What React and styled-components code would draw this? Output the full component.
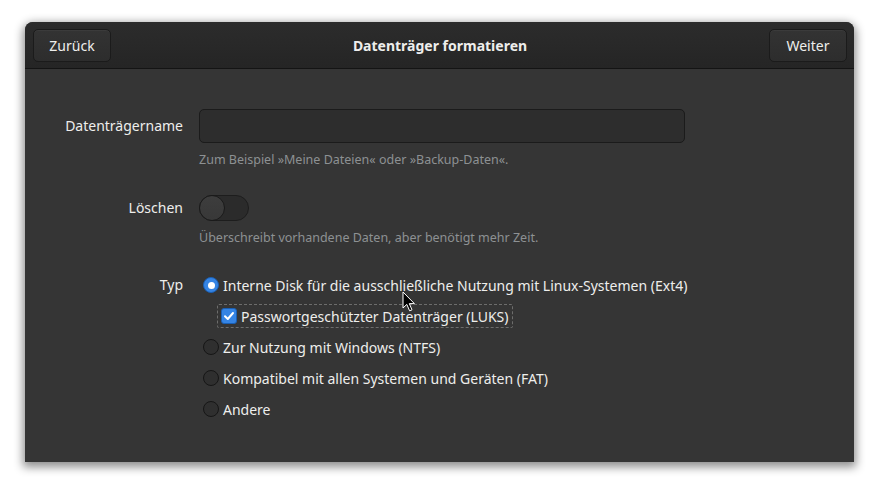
import React from "react";
import styled, { createGlobalStyle } from "styled-components";

const Global = createGlobalStyle`
  html, body {
    margin: 0;
    background: #ffffff;
  }
  body {
    font-family: "Noto Sans", "Open Sans", sans-serif;
    font-size: 14px;
    color: #eeeeec;
  }
`;

const Page = styled.div`
  width: 880px;
  height: 490px;
  padding: 22px 26px 0 25px;
  box-sizing: border-box;
  position: relative;
`;

const Window = styled.div`
  width: 829px;
  height: 440px;
  background: #353535;
  border-radius: 8px 8px 0 0;
  box-shadow: 0 3px 10px 2px rgba(0, 0, 0, 0.45);
  display: flex;
  flex-direction: column;
  overflow: hidden;
`;

const HeaderBar = styled.div`
  height: 46px;
  flex: none;
  background: linear-gradient(#2c2c2c, #252525);
  border-bottom: 1px solid #141414;
  display: flex;
  align-items: center;
  justify-content: space-between;
  padding: 0 7px 0 8px;
`;

const Title = styled.div`
  font-weight: 700;
  font-size: 14px;
  color: #eeeeec;
`;

const HeaderButton = styled.button`
  height: 33px;
  width: 78px;
  border: 1px solid #1b1b1b;
  border-radius: 5px;
  background: linear-gradient(#333333, #2d2d2d);
  color: #eeeeec;
  font-family: inherit;
  font-size: 14px;
  box-shadow: inset 0 1px rgba(255, 255, 255, 0.04);
`;

const Form = styled.div`
  padding-top: 40px;
  display: flex;
  flex-direction: column;
  gap: 27px;
`;

const Field = styled.div`
  display: grid;
  grid-template-columns: 158px auto;
  column-gap: 16px;
  align-items: start;
  white-space: nowrap;
`;

const Label = styled.div`
  text-align: right;
  line-height: ${(p) => p.$h}px;
  height: ${(p) => p.$h}px;
`;

const Control = styled.div`
  display: flex;
  flex-direction: column;
  align-items: flex-start;
`;

const TextInput = styled.input`
  width: 486px;
  height: 34px;
  box-sizing: border-box;
  background: #2d2d2d;
  border: 1px solid #1b1b1b;
  border-radius: 5px;
  color: #eeeeec;
  outline: none;
`;

const Hint = styled.div`
  margin-top: 8px;
  line-height: 17px;
  font-size: 12.5px;
  color: #8d9193;
`;

const Switch = styled.div`
  width: 50px;
  height: 26px;
  box-sizing: border-box;
  border-radius: 13px;
  background: #2b2b2b;
  border: 1px solid #1d1d1d;
  position: relative;
`;

const Knob = styled.div`
  position: absolute;
  left: -1px;
  top: -1px;
  width: 26px;
  height: 26px;
  box-sizing: border-box;
  border-radius: 50%;
  background: linear-gradient(#3d3d3d, #383838);
  border: 1px solid #1a1a1a;
`;

const Options = styled.div`
  display: flex;
  flex-direction: column;
  gap: 7px;
  padding-left: 4px;
`;

const Option = styled.div`
  display: flex;
  align-items: center;
  gap: 4px;
  height: 24px;
  box-sizing: border-box;
  align-self: flex-start;
  ${(p) =>
    p.$focus &&
    `
    margin-left: 14px;
    padding: 0 4px 0 3px;
    border: 1px dashed rgba(238, 238, 236, 0.3);
    border-radius: 2px;
  `}
`;

const Radio = styled.span`
  width: 16px;
  height: 16px;
  box-sizing: border-box;
  border-radius: 50%;
  flex: none;
  display: flex;
  align-items: center;
  justify-content: center;
  background: ${(p) => (p.$on ? "#3584e4" : "#2f2f2f")};
  border: 1px solid ${(p) => (p.$on ? "#1a5fb4" : "#161616")};
  &::after {
    content: "";
    display: ${(p) => (p.$on ? "block" : "none")};
    width: 7px;
    height: 7px;
    border-radius: 50%;
    background: #ffffff;
  }
`;

const Check = styled.span`
  width: 16px;
  height: 16px;
  box-sizing: border-box;
  border-radius: 3px;
  flex: none;
  background: #3584e4;
  border: 1px solid #1a5fb4;
  display: flex;
  align-items: center;
  justify-content: center;
`;

const Pointer = styled.svg`
  position: absolute;
  left: 402px;
  top: 291px;
`;

const options = [
  "Zur Nutzung mit Windows (NTFS)",
  "Kompatibel mit allen Systemen und Geräten (FAT)",
  "Andere",
];

export default function App() {
  return (
    <>
      <Global />
      <Page>
        <Window>
          <HeaderBar>
            <HeaderButton>Zurück</HeaderButton>
            <Title>Datenträger formatieren</Title>
            <HeaderButton>Weiter</HeaderButton>
          </HeaderBar>
          <Form>
            <Field>
              <Label $h={34}>Datenträgername</Label>
              <Control>
                <TextInput />
                <Hint>Zum Beispiel »Meine Dateien« oder »Backup-Daten«.</Hint>
              </Control>
            </Field>
            <Field>
              <Label $h={26}>Löschen</Label>
              <Control>
                <Switch>
                  <Knob />
                </Switch>
                <Hint>Überschreibt vorhandene Daten, aber benötigt mehr Zeit.</Hint>
              </Control>
            </Field>
            <Field>
              <Label $h={24}>Typ</Label>
              <Options>
                <Option>
                  <Radio $on />
                  Interne Disk für die ausschließliche Nutzung mit Linux-Systemen (Ext4)
                </Option>
                <Option $focus>
                  <Check>
                    <svg width="12" height="12" viewBox="0 0 12 12">
                      <path d="M2 6.2 L4.8 9 L10 3" fill="none" stroke="#fff" strokeWidth="2" strokeLinecap="round" strokeLinejoin="round" />
                    </svg>
                  </Check>
                  Passwortgeschützter Datenträger (LUKS)
                </Option>
                {options.map((o) => (
                  <Option key={o}>
                    <Radio />
                    {o}
                  </Option>
                ))}
              </Options>
            </Field>
          </Form>
        </Window>
        <Pointer width="14" height="22" viewBox="0 0 14 22">
          <path d="M1 1 L1 17 L4.8 13.4 L7.6 19.8 L10 18.8 L7.3 12.6 L12.4 12.6 Z" fill="#000" stroke="#fff" strokeWidth="1" strokeLinejoin="round" />
        </Pointer>
      </Page>
    </>
  );
}
